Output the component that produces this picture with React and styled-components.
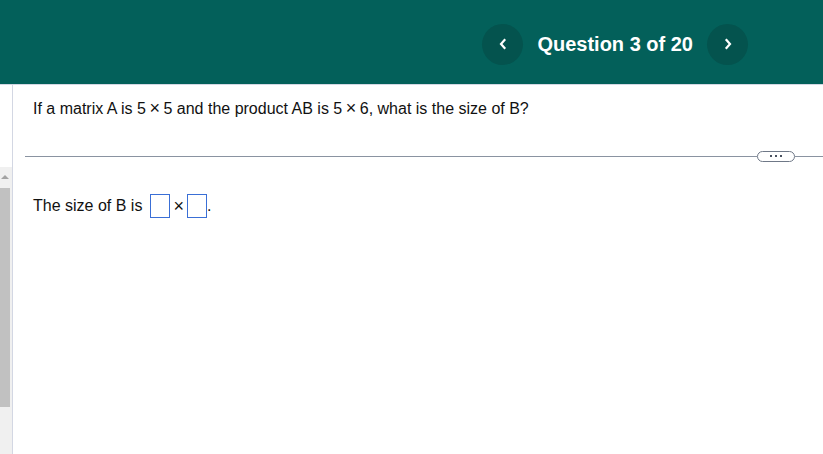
import React from "react";
import styled, { createGlobalStyle } from "styled-components";

const Global = createGlobalStyle`
  html, body { margin: 0; padding: 0; background: #fff; }
  body { font-family: "Liberation Sans", Arial, sans-serif; }
  * { box-sizing: border-box; }
`;

const Page = styled.div`
  width: 823px;
  height: 454px;
  display: flex;
  flex-direction: column;
  overflow: hidden;
`;

const Header = styled.header`
  height: 85px;
  flex: none;
  background: #03605a;
  border-bottom: 1px solid #d3d7e3;
  display: flex;
  align-items: center;
  justify-content: flex-end;
  padding: 4px 75px 0 0;
  gap: 14px;
`;

const NavButton = styled.button`
  width: 41px;
  height: 41px;
  border-radius: 50%;
  border: none;
  background: #04534e;
  display: flex;
  align-items: center;
  justify-content: center;
  padding: 0;
  cursor: pointer;
`;

const Title = styled.h1`
  margin: 0;
  color: #fff;
  font-size: 20px;
  font-weight: 700;
  font-family: "Liberation Sans", Arial, sans-serif;
`;

const Body = styled.div`
  flex: 1;
  display: flex;
`;

const Sidebar = styled.aside`
  width: 13px;
  flex: none;
  border-right: 1px solid #d3d7e3;
  display: flex;
  flex-direction: column;
  padding-top: 82px;
`;

const Track = styled.div`
  flex: 1;
  background: #f0f0f0;
  display: flex;
  flex-direction: column;
  align-items: flex-start;
`;

const Arrow = styled.div`
  width: 0;
  height: 0;
  margin: 8px 0 0 1px;
  border-left: 4px solid transparent;
  border-right: 4px solid transparent;
  border-bottom: 4px solid #a3a3a3;
`;

const Thumb = styled.div`
  width: 10px;
  height: 219px;
  margin-top: 9px;
  background: #c1c1c1;
`;

const Content = styled.main`
  flex: 1;
  display: flex;
  flex-direction: column;
  padding-top: 15px;
  color: #111;
  font-size: 16px;
`;

const Question = styled.p`
  margin: 0 0 0 20px;
  line-height: 18px;
`;

const Times = styled.span`
  font-size: 18px;
  line-height: 16px;
  margin: 0 3.5px;
`;

const Divider = styled.div`
  display: flex;
  align-items: center;
  margin: 32px 0 0 12px;
  height: 12px;
`;

const Rule = styled.div`
  height: 1px;
  background: #8a93a1;
  flex: ${(p) => (p.$grow ? 1 : "none")};
  width: ${(p) => (p.$grow ? "auto" : "28px")};
`;

const Pill = styled.div`
  width: 38px;
  height: 11px;
  border: 1px solid #6f7887;
  border-radius: 6px;
  display: flex;
  align-items: center;
  justify-content: center;
  gap: 3px;
`;

const Dot = styled.span`
  width: 2px;
  height: 2px;
  background: #4a5260;
`;

const Answer = styled.div`
  display: flex;
  align-items: center;
  margin: 32px 0 0 20px;
  line-height: 18px;
`;

const Blank = styled.span`
  display: inline-block;
  width: 20px;
  height: 24px;
  border: 1px solid #3a6fd6;
  margin-left: ${(p) => p.$ml || 0}px;
`;

const Cross = styled.span`
  font-size: 18px;
  margin: 0 3px 0 3px;
`;

const Chevron = ({ dir }) => (
  <svg width="8" height="12" viewBox="0 0 8 12">
    <path
      d={dir === "left" ? "M5.5 2 L2 6 L5.5 10" : "M2.5 2 L6 6 L2.5 10"}
      fill="none"
      stroke="#fff"
      strokeWidth="2.2"
      strokeLinecap="square"
    />
  </svg>
);

export default function App() {
  return (
    <Page>
      <Global />
      <Header>
        <NavButton aria-label="Previous question">
          <Chevron dir="left" />
        </NavButton>
        <Title>Question 3 of 20</Title>
        <NavButton aria-label="Next question">
          <Chevron dir="right" />
        </NavButton>
      </Header>
      <Body>
        <Sidebar>
          <Track>
            <Arrow />
            <Thumb />
          </Track>
        </Sidebar>
        <Content>
          <Question>
            If a matrix A is 5<Times>×</Times>5 and the product AB is 5<Times>×</Times>6, what is the size of B?
          </Question>
          <Divider>
            <Rule $grow />
            <Pill>
              <Dot />
              <Dot />
              <Dot />
            </Pill>
            <Rule />
          </Divider>
          <Answer>
            The size of B is
            <Blank $ml={8} />
            <Cross>×</Cross>
            <Blank />
            .
          </Answer>
        </Content>
      </Body>
    </Page>
  );
}
